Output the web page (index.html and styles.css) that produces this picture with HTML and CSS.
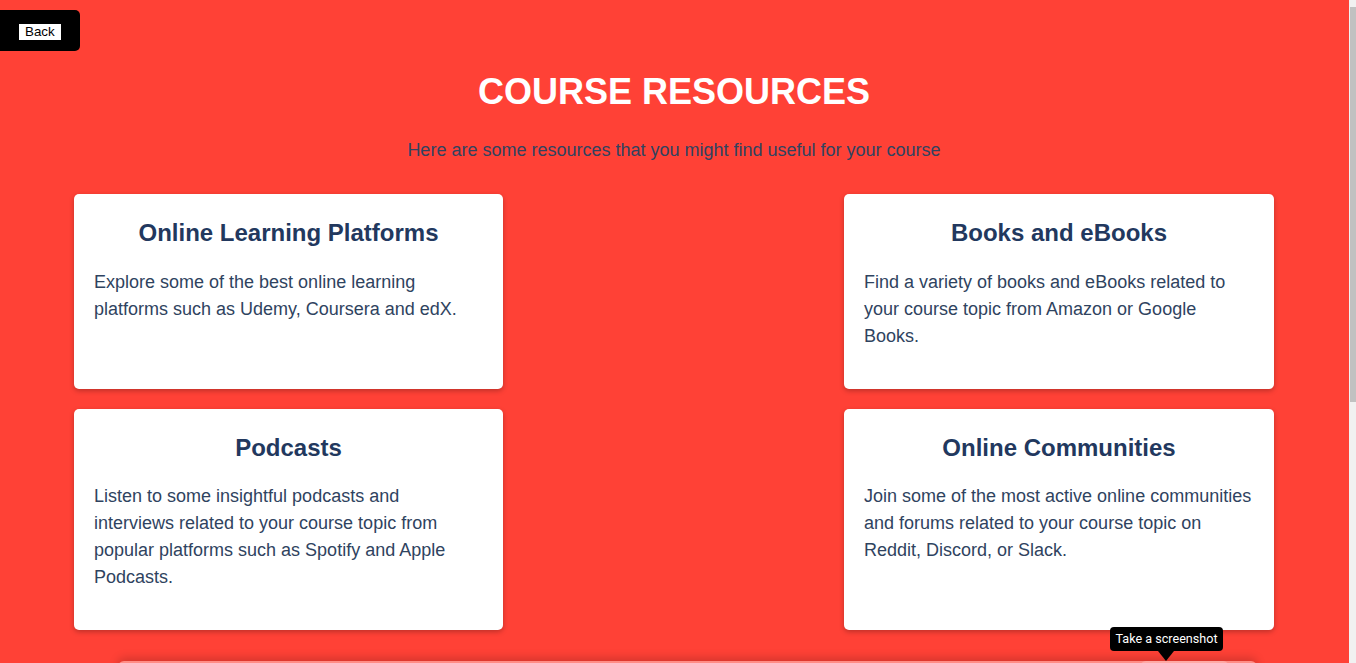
FILE: index.html
```html
<!DOCTYPE html>
<html lang="en">
<head>
<meta charset="utf-8">
<title>Course Resources</title>
<link rel="stylesheet" href="styles.css">
</head>
<body>
  <div class="page">
    <div class="topbar">
      <div class="back-wrap"><button class="back-btn" type="button">Back</button></div>
    </div>
    <h1 class="title">COURSE RESOURCES</h1>
    <p class="subtitle">Here are some resources that you might find useful for your course</p>
    <main class="grid">
      <section class="card">
        <h2 class="card-title">Online Learning Platforms</h2>
        <p class="card-text">Explore some of the best online learning platforms such as Udemy, Coursera and edX.</p>
      </section>
      <section class="card">
        <h2 class="card-title">Books and eBooks</h2>
        <p class="card-text">Find a variety of books and eBooks related to your course topic from Amazon or Google Books.</p>
      </section>
      <section class="card">
        <h2 class="card-title">Podcasts</h2>
        <p class="card-text">Listen to some insightful podcasts and interviews related to your course topic from popular platforms such as Spotify and Apple Podcasts.</p>
      </section>
      <section class="card">
        <h2 class="card-title">Online Communities</h2>
        <p class="card-text">Join some of the most active online communities and forums related to your course topic on Reddit, Discord, or Slack.</p>
      </section>
    </main>
    <div class="spacer"></div>
  </div>

  <div class="scrollbar"><div class="scroll-thumb"></div></div>
  <div class="shot-bar"><span class="shot-btn"></span></div>
  <div class="tooltip">Take a screenshot</div>
</body>
</html>
```
FILE: styles.css
```css
html { background: #ff4136; }
html::-webkit-scrollbar { display: none; }

body {
  margin: 0;
  background: #ff4136;
  font-family: "Liberation Sans", Arial, sans-serif;
  color: #2f4360;
}

.page { margin-right: 8px; }

.topbar { padding-top: 10px; }

.back-wrap {
  display: inline-flex;
  background: #000;
  padding: 14px 19px 11px;
  border-radius: 0 5px 5px 0;
}

.back-btn {
  font-family: "Liberation Sans", Arial, sans-serif;
  font-size: 13.33px;
  line-height: 16px;
  height: 16px;
  padding: 0 6px;
  margin: 0;
  border: 0;
  background: #fff;
  color: #000;
}

.title {
  margin: 20px 0 27px;
  text-align: center;
  color: #fff;
  font-size: 36px;
  font-weight: bold;
}

.subtitle {
  margin: 0 0 33px;
  text-align: center;
  font-size: 18px;
  color: #2f4360;
}

.grid {
  max-width: 1200px;
  margin: 0 auto;
  display: grid;
  grid-template-columns: 429px 430px;
  justify-content: space-between;
  row-gap: 20px;
}

.card {
  background: #fff;
  border-radius: 5px;
  padding: 20px;
  box-shadow: 0 2px 5px rgba(0, 0, 0, 0.25);
}

.card-title {
  margin: 5px 0 22px;
  text-align: center;
  font-size: 24px;
  line-height: 27.6px;
  font-weight: bold;
  color: #22385e;
}

.card-text {
  margin: 0 0 19px;
  font-size: 18px;
  line-height: 27px;
  color: #2f4360;
}

.spacer { height: 470px; }

.scrollbar {
  position: fixed;
  top: 0;
  right: 0;
  width: 7px;
  height: 100%;
  background: #f1f1f1;
}

.scroll-thumb {
  margin: 7px 0 0 1px;
  width: 6px;
  height: 395px;
  background: #c1c1c1;
}

.shot-bar {
  position: fixed;
  left: 118px;
  top: 661px;
  width: 1139px;
  height: 40px;
  border-radius: 6px;
  background: rgba(255, 255, 255, 0.4);
  box-shadow: 0 -3px 10px rgba(0, 0, 0, 0.18);
}

.shot-btn {
  position: absolute;
  left: 1022px;
  top: 0;
  width: 89px;
  height: 40px;
  border-radius: 6px;
  background: rgba(255, 255, 255, 0.25);
}

.tooltip {
  position: fixed;
  left: 1110px;
  top: 627px;
  width: 113px;
  height: 24px;
  box-sizing: border-box;
  background: #000;
  color: #fff;
  border-radius: 4px;
  font-family: Roboto, "Noto Sans", sans-serif;
  font-size: 12.6px;
  line-height: 24px;
  text-align: center;
  white-space: nowrap;
}

.tooltip::after {
  content: "";
  position: absolute;
  left: 48px;
  top: 24px;
  border-left: 8px solid transparent;
  border-right: 8px solid transparent;
  border-top: 10px solid #000;
}
```
